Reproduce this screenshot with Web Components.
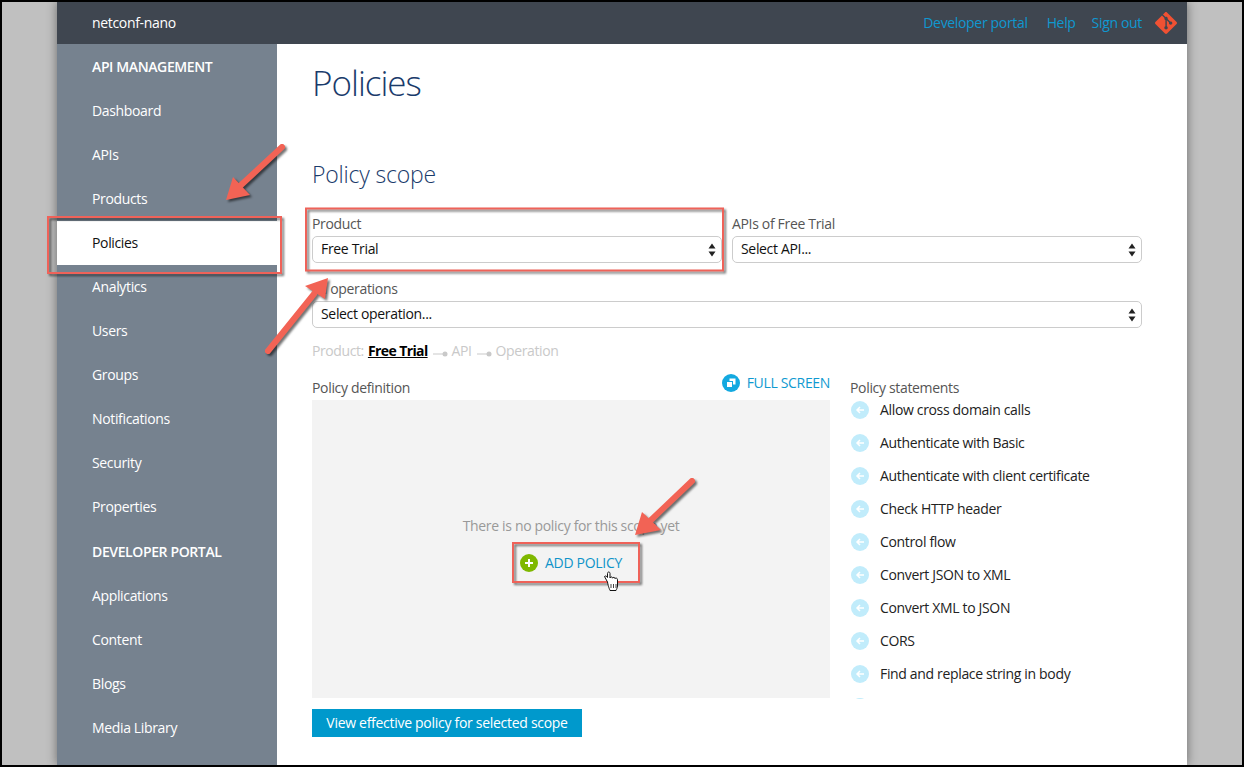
<!DOCTYPE html>
<html>
<head>
<meta charset="utf-8">
<title>Policies</title>
<style>
  html, body { margin: 0; height: 100%; overflow: hidden; }
  body { font-family: "Open Sans", "Liberation Sans", sans-serif; }
</style>
</head>
<body>
<app-frame>
  <top-bar slot="top" name="netconf-nano"></top-bar>
  <side-nav slot="side"></side-nav>
  <policies-page slot="main"></policies-page>
</app-frame>
<call-outs></call-outs>

<script>
const FONT = `"Open Sans", "Liberation Sans", sans-serif`;

class AppFrame extends HTMLElement {
  constructor() {
    super();
    this._sR = this.attachShadow({ mode: "open" });
    this._sR.innerHTML = `
      <style>
      :host { display: block; box-sizing: border-box; width: 1244px; height: 767px;
        border: 2px solid #000; background: #c0c0c0; padding: 0 55px; overflow: hidden; }
      .shell { height: 100%; display: grid; grid-template-columns: 220px 1fr; grid-template-rows: 42px 1fr;
        box-shadow: 0 0 10px rgba(0,0,0,.45); background: #fff; }
      .top { grid-column: 1 / 3; }
      .side, .main { min-height: 0; overflow: hidden; }
      </style>
      <div class="shell">
        <div class="top"><slot name="top"></slot></div>
        <div class="side"><slot name="side"></slot></div>
        <div class="main"><slot name="main"></slot></div>
      </div>`;
  }
}

class TopBar extends HTMLElement {
  constructor() {
    super();
    this._sR = this.attachShadow({ mode: "open" });
    this._sR.innerHTML = `
      <style>
      :host { display: flex; align-items: center; height: 42px; background: #3f4650; padding: 0 10px 0 35px;
        font: 14px/18px ${FONT}; letter-spacing: -.33px; }
      .name { color: #fff; flex: 1; }
      a { color: #0f98d0; text-decoration: none; }
      .dev { margin-right: 19px; }
      .help { margin-right: 16px; }
      svg { display: block; width: 22px; height: 22px; margin-left: 13px; }
      </style>
      <span class="name"></span>
      <a class="dev">Developer portal</a>
      <a class="help">Help</a>
      <a>Sign out</a>
      <svg viewBox="0 0 24 24"><path fill="#f05133" d="M23.546 10.93L13.067.452c-.604-.603-1.582-.603-2.188 0L8.708 2.627l2.76 2.76c.645-.215 1.379-.07 1.889.441.516.515.658 1.258.438 1.9l2.658 2.66c.645-.223 1.387-.078 1.9.435.721.72.721 1.884 0 2.604-.719.719-1.881.719-2.6 0-.539-.541-.674-1.337-.404-1.996L12.86 8.955v6.525c.176.086.342.203.488.348.713.721.713 1.883 0 2.6-.719.721-1.889.721-2.609 0-.719-.719-.719-1.879 0-2.598.182-.18.387-.316.605-.406V8.835c-.217-.091-.424-.222-.6-.401-.545-.545-.676-1.342-.396-2.009L7.636 3.7.45 10.881c-.6.605-.6 1.584 0 2.189l10.48 10.477c.604.604 1.582.604 2.186 0l10.43-10.43c.605-.603.605-1.582 0-2.187"/></svg>`;
    this._sR.querySelector(".name").textContent = this.getAttribute("name");
  }
}

const NAV = [
  ["API MANAGEMENT", "head"], ["Dashboard"], ["APIs"], ["Products"], ["Policies", "active"],
  ["Analytics"], ["Users"], ["Groups"], ["Notifications"], ["Security"], ["Properties"],
  ["DEVELOPER PORTAL", "head second"], ["Applications"], ["Content"], ["Blogs"], ["Media Library"]
];

class SideNav extends HTMLElement {
  constructor() {
    super();
    this._sR = this.attachShadow({ mode: "open" });
    this._sR.innerHTML = `
      <style>
      :host { display: block; height: 100%; background: #76828f; padding-top: 1px; box-sizing: border-box;
        font: 14px/18px ${FONT}; letter-spacing: -.35px; color: #fff; }
      div { height: 44px; display: flex; align-items: center; padding-left: 35px; }
      .head { font-weight: 600; letter-spacing: -.38px; }
      .second { margin-top: 1px; }
      .active { background: #fff; color: #111; }
      </style>`;
    NAV.forEach(([text, cls]) => {
      let $row = document.createElement("div");
      $row.textContent = text;
      if (cls) $row.className = cls;
      this._sR.appendChild($row);
    });
  }
}

class FieldSelect extends HTMLElement {
  constructor() {
    super();
    this._sR = this.attachShadow({ mode: "open" });
    this._sR.innerHTML = `
      <style>
      :host { display: block; font: 14px/18px ${FONT}; letter-spacing: -.33px; }
      label { display: block; color: #555; margin-bottom: 3px; }
      .box { box-sizing: border-box; height: 27px; border: 1px solid #ccc; border-radius: 5px; background: #fff;
        display: flex; align-items: center; justify-content: space-between; padding: 0 5px 2px 8px; color: #111; }
      svg { width: 8px; height: 14px; display: block; position: relative; top: 1px; }
      </style>
      <label></label>
      <div class="box"><span></span>
        <svg viewBox="0 0 8 14"><path fill="#222" d="M4 0.5 7.500 5.500H.5zM4 13.500 .5 8.500h7z"/></svg>
      </div>`;
    this._sR.querySelector("label").textContent = this.getAttribute("label");
    this._sR.querySelector("span").textContent = this.getAttribute("value");
  }
}

class PolicyStatement extends HTMLElement {
  constructor() {
    super();
    this._sR = this.attachShadow({ mode: "open" });
    this._sR.innerHTML = `
      <style>
      :host { display: flex; align-items: center; height: 18px; flex: none; padding-left: 1px;
        font: 14px/18px ${FONT}; letter-spacing: -.34px; color: #222; }
      svg { width: 18px; height: 18px; margin-right: 11px; flex: none; }
      </style>
      <svg viewBox="0 0 18 18"><circle cx="9" cy="9" r="9" fill="#c1ecfb"/>
        <path d="M13 9H6M9 6 6 9l3 3" fill="none" stroke="#fff" stroke-width="1.5"/></svg>
      <slot></slot>`;
  }
}

class PoliciesPage extends HTMLElement {
  constructor() {
    super();
    this._sR = this.attachShadow({ mode: "open" });
    this._sR.innerHTML = `
      <style>
      :host { display: block; height: 100%; box-sizing: border-box; background: #fff; padding: 14px 45px 0 35px;
        font: 14px/18px ${FONT}; letter-spacing: -.33px; color: #555; }
      h1 { margin: 0; font: 300 35px/50px ${FONT}; letter-spacing: -1px; color: #1a3b6b; }
      h2 { margin: 50px 0 0; font: 300 23px/32px ${FONT}; letter-spacing: -.2px; color: #1a3b6b; }
      .fields { margin-top: 25px; display: grid; grid-template-columns: 410px 410px; column-gap: 10px; row-gap: 17px; }
      .wide { grid-column: 1 / 3; }
      .crumbs { margin-top: 13px; height: 20px; display: flex; align-items: center; color: #c9c9c9; letter-spacing: -.4px; }
      .crumbs b { color: #000; text-decoration: underline; margin-left: 4px; letter-spacing: -.6px; }
      .crumbs svg { width: 15px; height: 8px; margin: 4px 4px 0 5px; }
      .def { margin-top: 13px; display: grid; grid-template-columns: 518px 1fr; column-gap: 20px; }
      .head { display: flex; justify-content: space-between; align-items: flex-end; height: 23px; }
      .full { align-self: flex-start; display: flex; align-items: center; color: #0f9ad1; letter-spacing: -.33px; }
      .full svg { width: 18px; height: 18px; margin-right: 7px; }
      .empty { margin-top: 3px; height: 298px; background: #f3f3f3; box-sizing: border-box; padding-bottom: 10px;
        display: flex; flex-direction: column; align-items: center; justify-content: center; color: #999; }
      .add { margin-top: 19px; display: flex; align-items: center; color: #0f93c9; letter-spacing: -.3px; }
      .add svg { width: 18px; height: 18px; margin-right: 7px; }
      .view { margin-top: 11px; width: 270px; height: 28px; display: flex; align-items: center; justify-content: center;
        background: #0099cc; color: #fff; letter-spacing: -.29px; }
      .statements { padding-top: 5px; }
      .list { margin-top: 4px; height: 298px; overflow: hidden; display: flex; flex-direction: column; gap: 15px; }
      </style>
      <h1>Policies</h1>
      <h2>Policy scope</h2>
      <div class="fields">
        <field-select label="Product" value="Free Trial"></field-select>
        <field-select label="APIs of Free Trial" value="Select API..."></field-select>
        <field-select class="wide" label="All operations" value="Select operation..."></field-select>
      </div>
      <div class="crumbs">Product: <b>Free Trial</b>
        <svg viewBox="0 0 15 8"><path d="M0 5h11" stroke="#c9c9c9"/><circle cx="12" cy="5" r="2.5" fill="#c9c9c9"/></svg>API
        <svg viewBox="0 0 15 8"><path d="M0 5h11" stroke="#c9c9c9"/><circle cx="12" cy="5" r="2.5" fill="#c9c9c9"/></svg>Operation
      </div>
      <div class="def">
        <div>
          <div class="head">
            <span>Policy definition</span>
            <span class="full">
              <svg viewBox="0 0 18 18"><circle cx="9" cy="9" r="9" fill="#13a9e0"/>
                <rect x="7.5" y="4.5" width="6" height="6" fill="#fff"/><rect x="4.5" y="7.5" width="6" height="6" fill="#fff" stroke="#13a9e0"/></svg>
              FULL SCREEN</span>
          </div>
          <div class="empty">
            <span>There is no policy for this scope yet</span>
            <span class="add">
              <svg viewBox="0 0 18 18"><circle cx="9" cy="9" r="9" fill="#7fb800"/>
                <path d="M9 5v8M5 9h8" stroke="#fff" stroke-width="2"/></svg>
              ADD POLICY</span>
          </div>
          <div class="view">View effective policy for selected scope</div>
        </div>
        <div class="statements">
          <span>Policy statements</span>
          <div class="list">
            <policy-statement>Allow cross domain calls</policy-statement>
            <policy-statement>Authenticate with Basic</policy-statement>
            <policy-statement>Authenticate with client certificate</policy-statement>
            <policy-statement>Check HTTP header</policy-statement>
            <policy-statement>Control flow</policy-statement>
            <policy-statement>Convert JSON to XML</policy-statement>
            <policy-statement>Convert XML to JSON</policy-statement>
            <policy-statement>CORS</policy-statement>
            <policy-statement>Find and replace string in body</policy-statement>
            <policy-statement></policy-statement>
          </div>
        </div>
      </div>`;
  }
}

// red boxes, arrows and the cursor drawn over the screenshot
class CallOuts extends HTMLElement {
  constructor() {
    super();
    this._sR = this.attachShadow({ mode: "open" });
    this._sR.innerHTML = `
      <style>
      :host { position: absolute; left: 0; top: 0; width: 1244px; height: 767px; pointer-events: none; }
      svg { position: absolute; left: 0; top: 0; }
      .mark { filter: drop-shadow(2px 2px 1px rgba(0,0,0,.55)); }
      rect { fill: none; stroke: #ef6259; stroke-width: 2; }
      line { stroke: #f26355; stroke-width: 6; stroke-linecap: round; }
      polygon { fill: #f26355; }
      </style>
      <svg width="1244" height="767">
        <g class="mark">
          <rect x="48" y="217" width="233" height="56"/>
          <rect x="306" y="208.5" width="417" height="62"/>
          <rect x="513" y="543" width="126" height="39"/>
        </g>
        <g class="mark">
          <line x1="282" y1="147" x2="240" y2="186"/>
          <polygon points="226,200 233,177 250,195"/>
        </g>
        <g class="mark">
          <line x1="268" y1="351" x2="314" y2="294"/>
          <polygon points="328,278 305,286 325,299"/>
        </g>
        <g class="mark">
          <line x1="692" y1="481" x2="650" y2="521"/>
          <polygon points="635,535 642,512 661,530"/>
        </g>
        <path d="M607.5 582 604.5 576.5c1-1 2-.5 3 1V573.5c0-2 2.5-2 2.5 0V578c.5-1.5 2.5-1.500 2.500.2.500-1.200 2.500-1.200 2.500.5.500-1 2.500-.8 2.500 1V586c0 2-1 3-1.500 4.500H610c-.5-1.500-1.500-3-2.500-8.500z" fill="#fff" stroke="#111" stroke-width="1"/>
        <path d="M611 584v4M613.500 584v4M616 584v4" stroke="#111" stroke-width=".8"/>
      </svg>`;
  }
}

customElements.define("app-frame", AppFrame);
customElements.define("top-bar", TopBar);
customElements.define("side-nav", SideNav);
customElements.define("field-select", FieldSelect);
customElements.define("policy-statement", PolicyStatement);
customElements.define("policies-page", PoliciesPage);
customElements.define("call-outs", CallOuts);
</script>
</body>
</html>
